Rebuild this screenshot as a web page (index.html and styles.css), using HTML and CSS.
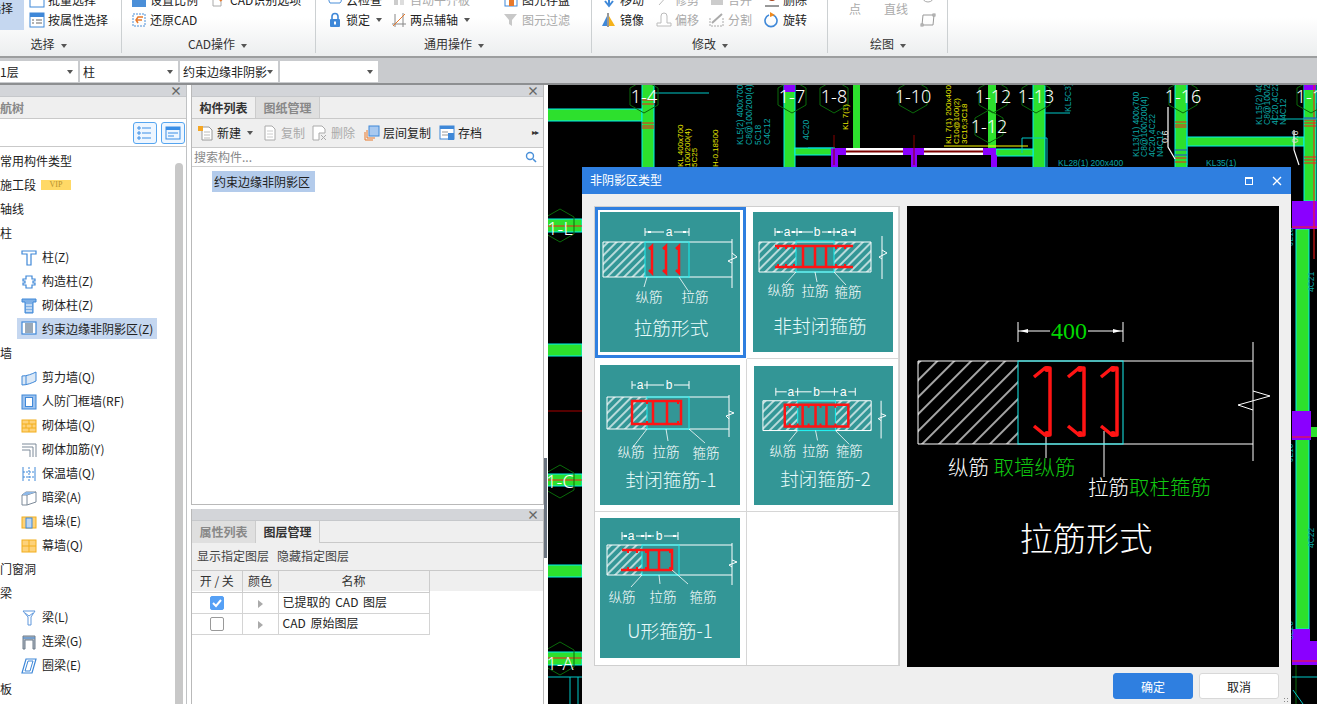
FILE: index.html
```html
<!DOCTYPE html>
<html lang="zh">
<head>
<meta charset="utf-8">
<title>非阴影区类型</title>
<link rel="stylesheet" href="styles.css">
</head>
<body>
<svg class="defs" width="0" height="0">
  <defs>
    <pattern id="hatch" width="6" height="6" patternUnits="userSpaceOnUse" patternTransform="rotate(45)"><line class="hl" x1="3" y1="0" x2="3" y2="6"/></pattern>
    <pattern id="hatchbig" width="12" height="12" patternUnits="userSpaceOnUse" patternTransform="rotate(45)"><line class="hl" x1="6" y1="0" x2="6" y2="12"/></pattern>
  </defs>
</svg>

<header class="ribbon">
  <section class="rgroup g-select">
    <div class="rrows">
      <div class="bigbtn"><span>选择</span></div>
      <div class="rcol">
        <div class="ritem"><svg class="ic" viewBox="0 0 16 16"><rect x="1" y="1" width="14" height="14" fill="#fff" stroke="#3f88d8"/></svg>批量选择</div>
        <div class="ritem"><svg class="ic" viewBox="0 0 16 16"><rect x="1" y="1" width="14" height="14" fill="#fff" stroke="#3f88d8"/><rect x="1" y="1" width="14" height="4" fill="#3f88d8"/><path d="M3 8h2M7 8h6M3 11h2M7 11h6" stroke="#666"/></svg>按属性选择</div>
      </div>
    </div>
    <div class="rlabel">选择<i class="caret"></i></div>
  </section>
  <section class="rgroup g-cad">
    <div class="rrows">
      <div class="rcol">
        <div class="ritem"><svg class="ic" viewBox="0 0 16 16"><rect x="1" y="2" width="14" height="13" fill="#4b8fd8"/></svg>设置比例</div>
        <div class="ritem"><svg class="ic" viewBox="0 0 16 16"><rect x="2" y="2" width="12" height="12" fill="none" stroke="#4b8fd8" stroke-dasharray="2 1"/><path d="M12 5H7L5 8l2 3M5 8h6" fill="none" stroke="#e8792b" stroke-width="1.5"/></svg>还原CAD</div>
      </div>
      <div class="rcol">
        <div class="ritem"><svg class="ic" viewBox="0 0 16 16"><path d="M2 2h8v12H2z" fill="#fff" stroke="#aaa"/><path d="M9 9l5-5" stroke="#e8792b" stroke-width="2"/></svg>CAD识别选项</div>
        <div class="ritem"></div>
      </div>
    </div>
    <div class="rlabel">CAD操作<i class="caret"></i></div>
  </section>
  <section class="rgroup g-common">
    <div class="rrows">
      <div class="rcol">
        <div class="ritem"><svg class="ic" viewBox="0 0 16 16"><path d="M2 9a4 4 0 0 1 4-5h5a4 4 0 0 1 2 7H3z" fill="#fff" stroke="#4b8fd8"/></svg>云检查</div>
        <div class="ritem"><svg class="ic" viewBox="0 0 16 16"><rect x="3" y="7" width="10" height="8" rx="1" fill="#3f88d8"/><path d="M5 7V4.500a3 3 0 0 1 6 0V7" fill="none" stroke="#3f88d8" stroke-width="1.600"/><rect x="7" y="9.500" width="2" height="3" fill="#fff"/></svg>锁定<i class="caret"></i></div>
      </div>
      <div class="rcol">
        <div class="ritem off"><svg class="ic" viewBox="0 0 16 16"><rect x="3" y="3" width="4" height="10" fill="#ccc"/><rect x="9" y="3" width="4" height="10" fill="#ddd"/></svg>自动平齐板</div>
        <div class="ritem"><svg class="ic" viewBox="0 0 16 16"><path d="M1 12h14M4 2v13M12 1v14" stroke="#888" fill="none"/><path d="M2 14L14 2" stroke="#e8792b"/></svg>两点辅轴<i class="caret"></i></div>
      </div>
      <div class="rcol">
        <div class="ritem"><svg class="ic" viewBox="0 0 16 16"><rect x="2" y="2" width="12" height="12" fill="#fff" stroke="#3f88d8"/><rect x="6" y="8" width="5" height="6" fill="#e8792b"/></svg>图元存盘</div>
        <div class="ritem off"><svg class="ic" viewBox="0 0 16 16"><path d="M1 2h13L9 8v6l-3-2V8z" fill="#c8c8c8"/></svg>图元过滤</div>
      </div>
    </div>
    <div class="rlabel">通用操作<i class="caret"></i></div>
  </section>
  <section class="rgroup g-modify">
    <div class="rrows">
      <div class="rcol">
        <div class="ritem"><svg class="ic" viewBox="0 0 16 16"><path d="M8 1v12M4 9l4 5 4-5" fill="none" stroke="#3f88d8" stroke-width="2"/></svg>移动</div>
        <div class="ritem"><svg class="ic" viewBox="0 0 16 16"><path d="M7 1v14" stroke="#333"/><path d="M6 4v10H1z" fill="#3f88d8"/><path d="M8 4v10h6z" fill="#f5b21a"/></svg>镜像</div>
      </div>
      <div class="rcol">
        <div class="ritem off"><svg class="ic" viewBox="0 0 16 16"><path d="M3 13L12 3" stroke="#bbb"/></svg>修剪</div>
        <div class="ritem off"><svg class="ic" viewBox="0 0 16 16"><path d="M1 14v-3h4V4a3 3 0 0 1 6 0v7h4v3z" fill="#fff" stroke="#bbb"/></svg>偏移</div>
      </div>
      <div class="rcol">
        <div class="ritem off"><svg class="ic" viewBox="0 0 16 16"><rect x="2" y="3" width="12" height="10" fill="#ccc"/></svg>合并</div>
        <div class="ritem off"><svg class="ic" viewBox="0 0 16 16"><path d="M1 6v8h13V6" fill="none" stroke="#aaa" stroke-dasharray="2 1"/><path d="M3 11L13 2" stroke="#aaa" stroke-width="2"/></svg>分割</div>
      </div>
      <div class="rcol">
        <div class="ritem"><svg class="ic" viewBox="0 0 16 16"><circle cx="8" cy="5" r="4" fill="#a8431c"/><path d="M1 14h14" stroke="#333"/></svg>删除</div>
        <div class="ritem"><svg class="ic" viewBox="0 0 16 16"><path d="M9 3a6 6 0 1 1-4 0" fill="none" stroke="#3f88d8" stroke-width="1.600"/><path d="M6 0l5 3-5 2z" fill="#f08a1d"/></svg>旋转</div>
      </div>
    </div>
    <div class="rlabel">修改<i class="caret"></i></div>
  </section>
  <section class="rgroup g-draw">
    <div class="rrows">
      <div class="drawtext">
        <span>点</span><span>直线</span>
      </div>
      <div class="rcol drawicons">
        <div class="ritem"><svg class="ic" viewBox="0 0 16 16"><circle cx="8" cy="4" r="6" fill="none" stroke="#aaa"/></svg></div>
        <div class="ritem"><svg class="ic" viewBox="0 0 16 16"><path d="M3 3h11l-1 10H2z" fill="none" stroke="#999"/><rect x="1" y="12" width="2" height="2" fill="#fff" stroke="#999"/><rect x="13" y="2" width="2" height="2" fill="#fff" stroke="#999"/></svg></div>
      </div>
    </div>
    <div class="rlabel">绘图<i class="caret"></i></div>
  </section>
</header>

<nav class="selectbar">
  <div class="sel s1">1层<i class="caret"></i></div>
  <div class="sel s2">柱<i class="caret"></i></div>
  <div class="sel s3">约束边缘非阴影<i class="caret"></i></div>
  <div class="sel s4"><i class="caret"></i></div>
</nav>

<main class="main">
  <aside class="panel leftpanel">
    <div class="phead"><span class="px">×</span></div>
    <div class="tabs"><span class="lefttab">航树</span></div>
    <div class="viewbtns">
      <button class="vbtn"><svg viewBox="0 0 16 16" width="16" height="16"><path d="M5 3h9M5 8h9M5 13h9" stroke="#3a8ee6"/><path d="M1 2h2v2H1zM1 7h2v2H1zM1 12h2v2H1z" fill="none" stroke="#3a8ee6"/></svg></button>
      <button class="vbtn"><svg viewBox="0 0 16 16" width="16" height="16"><rect x="1" y="2" width="14" height="12" fill="none" stroke="#3a8ee6"/><rect x="1" y="2" width="14" height="3" fill="#3a8ee6"/><path d="M3 8h10M3 11h6" stroke="#3a8ee6"/></svg></button>
    </div>
    <div class="tree">
      <div class="tgroup">常用构件类型</div>
      <div class="tgroup">施工段<span class="vip">VIP</span></div>
      <div class="tgroup">轴线</div>
      <div class="tgroup">柱</div>
      <div class="titem"><svg class="tic" viewBox="0 0 16 16"><path d="M1 1h14v3h-3v0H10v11H6V4H1z" fill="#fff" stroke="#3f88d8" stroke-width="1.200"/></svg>柱(Z)</div>
      <div class="titem"><svg class="tic" viewBox="0 0 16 16"><path d="M5 2h6v3h3v2h-2v2h2v2h-3v3H5v-3H2V9h2V7H2V5h3z" fill="#fff" stroke="#3f88d8" stroke-width="1.200"/></svg>构造柱(Z)</div>
      <div class="titem"><svg class="tic" viewBox="0 0 16 16"><path d="M1 1h14v3h-3v11H4V4H1z" fill="#7fb0e6" stroke="#3f88d8"/><path d="M5 7h6M5 10h6M5 13h6" stroke="#fff"/></svg>砌体柱(Z)</div>
      <div class="titem sel-row"><svg class="tic" viewBox="0 0 16 16"><rect x="1" y="2" width="14" height="12" fill="#fff" stroke="#3f88d8" stroke-width="1.200"/><rect x="4" y="3" width="8" height="10" fill="#9aa9b8"/></svg>约束边缘非阴影区(Z)</div>
      <div class="tgroup">墙</div>
      <div class="titem"><svg class="tic" viewBox="0 0 16 16"><path d="M1 6c5 0 10-2 14-4v9c-4 2-9 4-14 4z" fill="#dbe8f6" stroke="#3f88d8"/><path d="M5 6v9" stroke="#3f88d8"/></svg>剪力墙(Q)</div>
      <div class="titem"><svg class="tic" viewBox="0 0 16 16"><rect x="1" y="1" width="14" height="14" fill="#9cc2ee" stroke="#3f88d8"/><rect x="4.500" y="3.500" width="7" height="9" fill="#fff" stroke="#3f88d8"/></svg>人防门框墙(RF)</div>
      <div class="titem"><svg class="tic" viewBox="0 0 16 16"><rect x="1" y="2" width="14" height="12" fill="#fdd27a" stroke="#f2ae1c"/><path d="M1 6h14M1 10h14M8 2v4M5 6v4M11 6v4M8 10v4" stroke="#f2ae1c"/></svg>砌体墙(Q)</div>
      <div class="titem"><svg class="tic" viewBox="0 0 16 16"><path d="M1 2h14v13M1 5h11v10M1 8h8v7" fill="none" stroke="#7d8a99"/></svg>砌体加筋(Y)</div>
      <div class="titem"><svg class="tic" viewBox="0 0 16 16"><path d="M2 1v14M14 1v14" stroke="#3f88d8"/><path d="M8 1v14M2 6h12M2 11h12" stroke="#3f88d8" stroke-dasharray="2 1"/></svg>保温墙(Q)</div>
      <div class="titem"><svg class="tic" viewBox="0 0 16 16"><path d="M1 5l4-3h10v10l-9 3H1z" fill="#fff" stroke="#7d8a99"/><path d="M1 5h5v10M6 5l9-3" fill="none" stroke="#7d8a99"/><path d="M1 5l4-3h10l-9 3z" fill="#8db8e8"/></svg>暗梁(A)</div>
      <div class="titem"><svg class="tic" viewBox="0 0 16 16"><rect x="1" y="3" width="14" height="11" fill="#fdd27a" stroke="#f2ae1c"/><rect x="5" y="4" width="6" height="10" fill="#bcd6f2" stroke="#3f88d8"/></svg>墙垛(E)</div>
      <div class="titem"><svg class="tic" viewBox="0 0 16 16"><rect x="1" y="2" width="14" height="12" fill="#fdd27a" stroke="#f2ae1c"/><path d="M1 8h14M8 2v12" stroke="#f2ae1c"/></svg>幕墙(Q)</div>
      <div class="tgroup">门窗洞</div>
      <div class="tgroup">梁</div>
      <div class="titem"><svg class="tic" viewBox="0 0 16 16"><path d="M2 1h12l-4 6v8H7V7z" fill="#fff" stroke="#5e97dc"/><path d="M4 3l4 3 4-3" fill="none" stroke="#5e97dc"/></svg>梁(L)</div>
      <div class="titem"><svg class="tic" viewBox="0 0 16 16"><path d="M2 15V2h12v13h-2V6H4v9z" fill="#aeb6c0" stroke="#6f7c8b"/><path d="M2 4h12" stroke="#3f88d8"/></svg>连梁(G)</div>
      <div class="titem"><svg class="tic" viewBox="0 0 16 16"><path d="M5 1h10l-4 14H1z" fill="#fff" stroke="#3f88d8" stroke-width="1.200"/><path d="M7 3h5l-3 10H4z" fill="none" stroke="#3f88d8"/></svg>圈梁(E)</div>
      <div class="tgroup">板</div>
      <div class="scrollthumb"></div>
    </div>
  </aside>

  <div class="midcol">
    <section class="panel comp">
      <div class="phead"><span class="px">×</span></div>
      <div class="tabs">
        <span class="tab active">构件列表</span><span class="tab">图纸管理</span>
      </div>
      <div class="mtools">
        <span class="mt t-new"><svg class="ic" viewBox="0 0 16 16"><path d="M4 2h7l3 3v10H4z" fill="#fff" stroke="#999"/><path d="M6 7h6M6 10h6M6 13h6" stroke="#bbb"/><path d="M0 1h5v5H0z" fill="#f5a623"/></svg>新建<i class="caret"></i></span>
        <span class="mt off t-copy"><svg class="ic" viewBox="0 0 16 16"><path d="M3 1h7l3 3v11H3z" fill="#fff" stroke="#aaa"/><path d="M5 6h6M5 9h6M5 12h6" stroke="#ccc"/></svg>复制</span>
        <span class="mt off t-del"><svg class="ic" viewBox="0 0 16 16"><path d="M1 1h9l3 3v4H7v7H1z" fill="#fff" stroke="#aaa"/><path d="M9 10l5 5M14 10l-5 5" stroke="#aaa"/></svg>删除</span>
        <span class="mt t-layer"><svg class="ic" viewBox="0 0 16 16"><rect x="5" y="1" width="10" height="10" fill="#a8c9f0" stroke="#3f88d8"/><path d="M3 5v8h8M1 7v8h8" fill="none" stroke="#e8792b"/></svg>层间复制</span>
        <span class="mt t-save"><svg class="ic" viewBox="0 0 16 16"><rect x="1" y="1" width="14" height="13" fill="#fff" stroke="#3f88d8"/><rect x="1" y="1" width="14" height="3" fill="#3f88d8"/><path d="M3 7h6M3 10h6" stroke="#999"/><rect x="9" y="8" width="6" height="7" fill="#3f88d8"/></svg>存档</span>
        <span class="more">▸▸</span>
      </div>
      <div class="search">搜索构件...<svg class="searchic" viewBox="0 0 12 12" width="12" height="12"><circle cx="5" cy="5" r="3.500" fill="none" stroke="#4a90d9" stroke-width="1.400"/><path d="M8 8l3 3" stroke="#4a90d9" stroke-width="1.600"/></svg></div>
      <div class="complist"><span class="compitem">约束边缘非阴影区</span></div>
    </section>
    <section class="panel layer">
      <div class="phead"><span class="px">×</span></div>
      <div class="tabs tabs2">
        <span class="tab">属性列表</span><span class="tab active">图层管理</span>
      </div>
      <div class="layertools"><span>显示指定图层</span><span>隐藏指定图层</span></div>
      <div class="theadbg">
        <table class="ltable">
          <thead><tr><th class="c1">开 / 关</th><th class="c2">颜色</th><th class="c3">名称</th></tr></thead>
          <tbody>
            <tr><td class="ctr"><span class="chk on"><svg viewBox="0 0 14 14" width="14" height="14"><path d="M3 7l3 3 5-6" fill="none" stroke="#fff" stroke-width="2"/></svg></span></td><td class="ctr"><i class="tri"></i></td><td>已提取的 CAD 图层</td></tr>
            <tr><td class="ctr"><span class="chk"></span></td><td class="ctr"><i class="tri"></i></td><td>CAD 原始图层</td></tr>
          </tbody>
        </table>
      </div>
    </section>
  </div>

  <div class="sash"><i></i></div>

  <div class="canvas">
    <svg class="cad" width="769" height="619" viewBox="548 85 769 619">
      <rect x="548" y="85" width="769" height="619" fill="#000"/>
      <g fill="#2de02d" stroke="#00f0f0" stroke-width="1">
        <rect x="540" y="109" width="102" height="12"/>
        <rect x="642" y="80" width="12" height="100"/>
        <rect x="784" y="80" width="11" height="100"/>
        <rect x="853" y="80" width="7" height="70" stroke="none"/>
        <rect x="988" y="80" width="8" height="70" stroke="none"/>
        <rect x="1033" y="80" width="12" height="100"/>
        <rect x="1175" y="80" width="12" height="100"/>
        <rect x="1187" y="137" width="117" height="9"/>
        <rect x="1304" y="80" width="12" height="121"/>
        <rect x="795" y="148" width="38" height="7"/>
        <rect x="996" y="149" width="37" height="7"/>
        <rect x="540" y="219" width="42" height="13"/>
        <rect x="540" y="344" width="42" height="12"/>
        <rect x="540" y="474" width="42" height="12"/>
        <rect x="540" y="565" width="42" height="12"/>
        <rect x="540" y="652" width="42" height="13"/>
        <rect x="1296" y="229" width="13" height="400"/>
        <rect x="1311" y="427" width="8" height="10" stroke="none"/>
      </g>
      <rect x="843" y="148" width="147" height="7" fill="#fff"/>
      <path d="M843 151.500H990" stroke="#7a0000" stroke-width="2"/>
      <g fill="#8a00ff">
        <rect x="831" y="148" width="15" height="7"/><rect x="903" y="148" width="21" height="7"/><rect x="983" y="148" width="13" height="7"/>
        <rect x="784" y="85" width="11" height="7"/>
        <rect x="1304" y="85" width="12" height="5"/>
        <rect x="1292" y="201" width="25" height="28"/>
        <rect x="1292" y="411" width="19" height="29"/>
        <path d="M1292 629h18v12h7v24h-25z"/>
        <rect x="831" y="155" width="7" height="12"/><rect x="911" y="155" width="6" height="12"/><rect x="991" y="155" width="6" height="12"/>
      </g>
      <g stroke="#ff1a1a" stroke-width="1" fill="none">
        <path d="M642 100h12M642 104h12M642 123h12M642 126h12M642 128h12M1175 122h12M1175 125h12M1175 127h12M1175 158h12M1175 162h12M1304 120h12M1304 123h12M1304 126h12M1304 157h12M1304 160h12M1304 163h12"/>
        <path d="M548 226h34M548 480h34M548 658h34M1292 227h25M1292 437h19M1292 661h25"/>
        <path d="M1314 85v174"/>
      </g>
      <path d="M548 411h34" stroke="#500" stroke-width="2"/>
      <path d="M834 135v30M914 135v30" stroke="#8a0000"/>
      <path d="M1296 665v39" stroke="#0a6a0a"/>
      <g stroke="#00c8c8" fill="none">
        <path d="M654 93h55M548 677h34M570 677v27M578 677v27M1292 677h25M1187 85v80M1045 113h25M808 148h27M1022 138h25M1047 138v29M1022 138v15M1270 119h47"/>
        <path d="M1293 690l10 14"/>
      </g>
      <path d="M944 146h84" stroke="#ffff00"/>
      <path d="M1168 107v40l7 12M1294 130v20l5 15" stroke="#fff" stroke-width="1.200" fill="none"/>
      <path d="M1175 150h12M1175 155h12M1304 118h12" stroke="#2a3fe0" stroke-width="1"/>
      <g fill="none" stroke="#0a6a0a" stroke-width="1">
        <path d="M644 80l14 8v17l-14 8-14-8V88z"/>
        <path d="M792 80l14 8v17l-14 8-14-8V88z"/>
        <path d="M834 80l14 8v17l-14 8-14-8V88z"/>
        <path d="M913 80l14 8v17l-14 8-14-8V88z"/>
        <path d="M993 80l14 8v17l-14 8-14-8V88z"/>
        <path d="M1036 80l14 8v17l-14 8-14-8V88z"/>
        <path d="M989 110l14 8v17l-14 8-14-8V118z"/>
        <path d="M1183 80l14 8v17l-14 8-14-8V88z"/>
        <path d="M1311 80l14 8v17l-14 8-14-8V88z"/>
        <path d="M560 209l14 8v17l-14 8-14-8V217z"/>
        <path d="M560 465l14 8v17l-14 8-14-8V473z"/>
        <path d="M560 642l14 8v17l-14 8-14-8V650z"/>
      </g>
      <g class="axis">
        <text x="644" y="103">1-4</text><text x="792" y="103">1-7</text><text x="834" y="103">1-8</text>
        <text x="913" y="103">1-10</text><text x="993" y="103">1-12</text><text x="1036" y="103">1-13</text>
        <text x="989" y="133">1-12</text><text x="1183" y="103">1-16</text><text x="1309" y="103">1-1</text>
        <text x="560" y="235">1-L</text><text x="560" y="488">1-C</text><text x="560" y="670">1-A</text>
      </g>
      <g class="ctext">
        <text transform="translate(743 145) rotate(-90)">KL5(2) 400x700</text>
        <text transform="translate(752 145) rotate(-90)">C8@100/200(4)</text>
        <text transform="translate(761 145) rotate(-90)">5C18</text>
        <text transform="translate(770 145) rotate(-90)">C4C12</text>
        <text transform="translate(809 140) rotate(-90)">4C20</text>
        <text transform="translate(1071 112) rotate(-90)">KL5C3)</text>
        <text transform="translate(1139 157) rotate(-90)">KL13(1) 400x700</text>
        <text transform="translate(1147 157) rotate(-90)">C8@100/200(4)</text>
        <text transform="translate(1155 157) rotate(-90)">4C20,4C22</text>
        <text transform="translate(1163 157) rotate(-90)">N4C12</text>
        <text transform="translate(1262 125) rotate(-90)">KL15(2) 400x</text>
        <text transform="translate(1270 125) rotate(-90)">C8@100/200</text>
        <text transform="translate(1278 125) rotate(-90)">4C20,4C22</text>
        <text transform="translate(1286 125) rotate(-90)">N4C12</text>
        <text transform="translate(1314 292) rotate(-90)">4C21</text>
        <text transform="translate(1314 548) rotate(-90)">4C22</text>
        <text transform="translate(1293 246) rotate(-90)">JL10</text>
        <text transform="translate(1293 462) rotate(-90)">JL10</text>
        <text transform="translate(1293 640) rotate(-90)">6L20</text>
        <text x="1206" y="166">KL35(1)</text>
        <text x="1058" y="166">KL28(1) 200x400</text>
      </g>
      <g class="ytext">
        <text transform="translate(683 167) rotate(-90)">KL 400x700</text>
        <text transform="translate(690 167) rotate(-90)">100/200(4)</text>
        <text transform="translate(697 167) rotate(-90)">5C25</text>
        <text transform="translate(718 167) rotate(-90)">H-0.18500</text>
        <text transform="translate(848 130) rotate(-90)">KL 7(1)</text>
        <text transform="translate(951 144) rotate(-90)">KL 7(1) 200x400</text>
        <text transform="translate(959 144) rotate(-90)">C10@100(2)</text>
        <text transform="translate(967 144) rotate(-90)">3C16;3C18</text>
      </g>
      <g class="wtext"><text transform="translate(1168 143) rotate(-90)">0.6</text><text transform="translate(1298 143) rotate(-90)">0.6</text></g>
    </svg>
  </div>
</main>

<div class="dialog">
  <div class="dtitle"><span>非阴影区类型</span><span class="dctrl"><i class="dmax"></i><svg viewBox="0 0 10 10" width="10" height="10"><path d="M1 1l8 8M9 1l-8 8" stroke="#fff" stroke-width="1.300"/></svg></span></div>
  <div class="dbody">
    <div class="dgrid">
      <div class="cell selected">
        <svg class="tile" viewBox="0 0 140 140" width="140" height="140">
          <rect x="3" y="30" width="42" height="35" fill="url(#hatch)"/>
          <path class="wl" d="M3 30H132M3 65H132M3 30V65M132 27V76M132 41l5 4-9 4 4 2M45 16v8M89 16v8M45 20H64M74 20H89"/>
          <path class="mk" d="M48 19h3v2h-3zM83 19h3v2h-3z"/>
          <rect class="cy" x="45" y="30" width="44" height="35"/>
          <path class="rd" d="M49 37l3-3v27l-3-3M63 37l3-3v27l-3-3M76 37l3-3v27l-3-3"/>
          <path class="wt" d="M47 65l-3 10M79 65l10 15"/>
          <text class="dimt" x="69" y="24">a</text>
          <text class="lab" x="49" y="90">纵筋</text><text class="lab" x="95" y="90">拉筋</text>
          <text class="ttl" x="71" y="123">拉筋形式</text>
        </svg>
      </div>
      <div class="cell">
        <svg class="tile" viewBox="0 0 140 140" width="140" height="140">
          <rect x="6" y="30" width="37" height="30" fill="url(#hatch)"/><rect x="81" y="30" width="37" height="30" fill="url(#hatch)"/>
          <path class="wl" d="M6 30H118M6 60H118M6 30V60M118 30V60M129 24V67M129 38l5 3-8 4 3 2M22 16v8M44 16v8M81 16v8M102 16v8M22 20H30M38 20H44M44 20H60M69 20H87M95 20H102"/>
          <path class="mk" d="M24 19h3v2h-3zM39 19h3v2h-3zM46 19h3v2h-3zM75 19h3v2h-3zM84 19h3v2h-3zM98 19h3v2h-3z"/>
          <rect class="cy" x="43" y="29" width="38" height="31"/>
          <path class="rd" d="M22 34H100M22 55H100M50 34V55M62 34V55M73 34V55"/>
          <path class="rt" d="M25 34v3M33 34v3M41 34v3M25 55v-3M33 55v-3M41 55v-3M83 34v3M92 34v3M83 55v-3M92 55v-3"/>
          <path class="wt" d="M43 60l-10 11M62 60l2 10M81 60l12 13"/>
          <text class="dimt" x="34" y="24">a</text><text class="dimt" x="64" y="24">b</text><text class="dimt" x="91" y="24">a</text>
          <text class="lab" x="28" y="83">纵筋</text><text class="lab" x="62" y="84">拉筋</text><text class="lab" x="95" y="85">箍筋</text>
          <text class="ttl" x="67" y="121">非封闭箍筋</text>
        </svg>
      </div>
      <div class="cell">
        <svg class="tile" viewBox="0 0 140 140" width="140" height="140">
          <rect x="7" y="32" width="40" height="32" fill="url(#hatch)"/>
          <path class="wl" d="M7 32H129M7 64H129M7 32V64M129 30V72M129 46l5 2-8 3 3 3M32 16v8M47 16v8M89 16v8M32 20H36M44 20H47M47 20H64M74 20H89"/>
          <rect class="cy" x="47" y="32" width="42" height="32"/>
          <path class="rd" d="M32 36H81V59H32zM53 36V59M67 36V59"/>
          <path class="rt" d="M47 36v3M53 36v3M67 36v3M78 36v3M47 59v-3M53 59v-3M67 59v-3M78 59v-3"/>
          <path class="wt" d="M47 64l-14 18M66 64l2 12M89 64l16 14"/>
          <text class="dimt" x="40" y="24">a</text><text class="dimt" x="69" y="24">b</text>
          <text class="lab" x="31" y="92">纵筋</text><text class="lab" x="66" y="92">拉筋</text><text class="lab" x="106" y="93">箍筋</text>
          <text class="ttl" x="71" y="122">封闭箍筋-1</text>
        </svg>
      </div>
      <div class="cell c4">
        <svg class="tile" viewBox="0 0 140 140" width="139" height="139">
          <rect x="9" y="35" width="35" height="30" fill="url(#hatch)"/><rect x="82" y="35" width="36" height="30" fill="url(#hatch)"/>
          <path class="wl" d="M9 35H118M9 65H118M9 35V65M118 35V65M128 35V73M128 48l5 2-8 3 3 2M22 22v8M44 22v8M81 22v8M102 22v8M22 26H33M41 26H58M67 26H85M95 26H102"/>
          <rect class="cy" x="44" y="35" width="38" height="30"/>
          <path class="rd" d="M31 39H95V61H31zM49 39V61M62 39V61M73 39V61"/>
          <path class="rt" d="M36 39v3M44 39v3M55 39v3M67 39v3M82 39v3M36 61v-3M44 61v-3M55 61v-3M67 61v-3M82 61v-3"/>
          <path class="wt" d="M44 65l-9 11M62 65l2 10M82 65l14 14"/>
          <text class="dimt" x="37" y="30">a</text><text class="dimt" x="63" y="30">b</text><text class="dimt" x="90" y="30">a</text>
          <text class="lab" x="29" y="91">纵筋</text><text class="lab" x="62" y="91">拉筋</text><text class="lab" x="96" y="91">箍筋</text>
          <text class="ttl" x="72" y="121">封闭箍筋-2</text>
        </svg>
      </div>
      <div class="cell">
        <svg class="tile" viewBox="0 0 140 140" width="140" height="140">
          <rect x="7" y="27" width="35" height="30" fill="url(#hatch)"/>
          <path class="wl" d="M7 27H132M7 57H132M7 27V57M132 25V67M132 42l5 2-8 3 3 2M22 14v8M46 14v8M78 14v8M22 18H27M36 18H54M64 18H78"/>
          <path class="mk" d="M24 17h3v2h-3zM41 17h3v2h-3zM48 17h3v2h-3zM73 17h3v2h-3z"/>
          <rect class="cy" x="42" y="27" width="37" height="30"/>
          <path class="rd" d="M22 32H72V52H21M48 32V52M59 32V52"/>
          <path class="rt" d="M28 32v3M37 32v3M46 32v3M70 32v3M28 52v-3M37 52v-3M46 52v-3M70 52v-3"/>
          <path class="wt" d="M42 57l-11 12M59 57l1 9M72 52l16 14"/>
          <text class="dimt" x="31" y="22">a</text><text class="dimt" x="59" y="22">b</text>
          <text class="lab" x="22" y="84">纵筋</text><text class="lab" x="63" y="84">拉筋</text><text class="lab" x="103" y="84">箍筋</text>
          <text class="ttl" x="70" y="120">U形箍筋-1</text>
        </svg>
      </div>
      <div class="cell"></div>
    </div>
    <div class="preview">
      <svg viewBox="907 206 372 461" width="372" height="461">
        <rect x="918" y="361" width="100" height="83" fill="url(#hatchbig)"/>
        <path class="wl2" d="M918 361H1253M918 444H1253M918 361V444M1253 342V461M1253 391l17 5-32 9 15 5M1018 322v20M1123 322v20M1018 331H1050M1088 331H1123M1046 436v22M1104 431v46"/>
        <path d="M1020 331l8-2v4zM1121 331l-8-2v4z" fill="#fff"/>
        <rect class="cy2" x="1018" y="361" width="105" height="83"/>
        <path class="rd2" d="M1034 377l11-9h5V435h-5l-11-9M1068 377l11-9h5V435h-5l-11-9M1101 377l11-9h5V435h-5l-11-9"/>
        <path d="M1047 369m-3 0a3 3 0 1 0 6 0a3 3 0 1 0-6 0M1047 434m-3 0a3 3 0 1 0 6 0a3 3 0 1 0-6 0M1080 369m-3 0a3 3 0 1 0 6 0a3 3 0 1 0-6 0M1080 434m-3 0a3 3 0 1 0 6 0a3 3 0 1 0-6 0M1113 369m-3 0a3 3 0 1 0 6 0a3 3 0 1 0-6 0M1113 434m-3 0a3 3 0 1 0 6 0a3 3 0 1 0-6 0" fill="#ff1414"/>
        <text class="big400" x="1069" y="339">400</text>
        <text class="pv" x="948" y="475"><tspan>纵筋</tspan> <tspan class="gr">取墙纵筋</tspan></text>
        <text class="pv" x="1088" y="495"><tspan>拉筋</tspan><tspan class="gr">取柱箍筋</tspan></text>
        <text class="pvt" x="1086" y="551">拉筋形式</text>
      </svg>
    </div>
  </div>
  <div class="dfoot"><button class="btn primary">确定</button><button class="btn">取消</button></div>
  <i class="grip"></i>
</div>
</body>
</html>
```
FILE: styles.css
```css
* { box-sizing: border-box; }
html, body { margin: 0; padding: 0; }
body {
  width: 1317px; height: 704px; overflow: hidden; position: relative; background: #fff;
  font: 12px/1.2 "Noto Sans CJK SC", "Noto Sans", sans-serif; color: #222;
}
.defs { position: absolute; }
.hl { stroke: #fff; stroke-width: 1.3; }
.caret { display: inline-block; width: 0; height: 0; border: 3.5px solid transparent; border-top: 4px solid #555; border-bottom: 0; margin-left: 6px; vertical-align: middle; }
.ic { width: 16px; height: 16px; flex: none; margin-right: 3px; }

/* ribbon */
.ribbon { height: 58px; display: flex; overflow: hidden; align-items: flex-end; background: linear-gradient(#fff 30%, #eceeef); border-bottom: 2px solid #9c9e9f; }
.rgroup { flex: none; position: relative; }
.rgroup::after { content: ""; position: absolute; right: 0; top: 0; bottom: 3px; width: 1px; background: #ccd0d2; }
.g-select { width: 122px; } .g-cad { width: 194px; } .g-common { width: 276px; } .g-modify { width: 236px; } .g-draw { width: 120px; }
.rrows { display: flex; height: 40px; align-items: flex-end; }
.rcol { display: flex; flex-direction: column; flex: none; }
.ritem { height: 20px; display: flex; align-items: center; white-space: nowrap; color: #222; }
.ritem.off { color: #aaa; }
.rlabel { height: 26px; line-height: 28px; text-align: center; color: #333; font-size: 12px; }
.rlabel .caret { margin-left: 6px; }
.g-select .rlabel { padding-right: 25px; }
.g-cad .rlabel { padding-right: 3px; }
.bigbtn { width: 24px; height: 32px; background: #c5d7f0; margin-right: 5px; overflow: hidden; align-self: flex-end; }
.bigbtn span { display: block; margin-left: -11px; width: 30px; padding-top: 3px; white-space: nowrap; }
.g-cad .rcol:first-child { margin-left: 9px; width: 80px; }
.g-common .rcol:first-child { margin-left: 11px; width: 64px; }
.g-common .rcol:nth-child(2) { width: 112px; }
.g-modify .rcol { width: 55px; }
.g-modify .rcol:first-child { margin-left: 9px; }
.g-modify .rcol:nth-child(2) { width: 53px; }
.drawtext { width: 92px; height: 40px; color: #aaa; padding: 12px 0 0 21px; display: flex; gap: 23px; align-self: flex-start; font-size: 12px; }
.drawicons { margin-top: -10px; }
.drawicons .ic { margin: 0; }

/* selects */
.selectbar { height: 27px; background: #c9cbce; border-bottom: 2px solid #8d8f91; display: flex; padding-top: 3px; gap: 2px; }
.sel { height: 21px; background: #fff; line-height: 21px; padding-left: 3px; position: relative; white-space: nowrap; overflow: hidden; flex: none; }
.sel .caret { position: absolute; right: 5px; top: 9px; margin: 0; }
.s1 { width: 78px; padding-left: 0; } .s2 { width: 98px; } .s3 { width: 98px; } .s4 { width: 98px; }

/* panels */
.main { display: flex; height: 619px; background: #fff; }
.panel { background: #fff; }
.leftpanel { width: 187px; border-right: 1px solid #c0c2c4; display: flex; flex-direction: column; margin-right: 4px; flex: none; }
.phead { height: 12px; background: #d3d5d9; position: relative; border-bottom: 1px solid #c6c8cb; flex: none; }
.px { position: absolute; right: 4px; top: -1px; font-size: 12px; line-height: 13px; color: #666; font-weight: 700; }
.tabs { height: 22px; background: #efefef; border-bottom: 1px solid #c9c9c9; display: flex; flex: none; }
.lefttab { font-weight: 700; color: #888; line-height: 21px; font-size: 12px; }
.tab { width: 64px; line-height: 21px; text-align: center; background: #dfdfdf; color: #888; font-weight: 700; border-right: 1px solid #ccc; }
.tab.active { background: #efefef; color: #333; }
.tabs2 .tab { height: 22px; }
.viewbtns { height: 28px; display: flex; gap: 4px; justify-content: flex-end; padding: 3px 1px 0 0; border-bottom: 1px solid #c9c9c9; flex: none; }
.vbtn { width: 24px; height: 22px; padding: 2px 3px; background: #eef6ff; border: 1px solid #55a5f0; border-radius: 3px; }
.tree { position: relative; flex: 1; padding-top: 2px; overflow: hidden; }
.tgroup { height: 24px; line-height: 24px; white-space: nowrap; display: flex; align-items: center; }
.vip { width: 30px; height: 10px; margin-left: 5px; background: #ffd966; color: #b8912e; font: 8px/10px "Liberation Serif", serif; text-align: center; }
.titem { height: 24px; width: 140px; margin-left: 17px; padding: 1px 0 0 4px; display: flex; align-items: center; white-space: nowrap; }
.sel-row { background: linear-gradient(#c5d7f0, #c5d7f0) 0 1px / 100% 21px no-repeat; padding-top: 1px; align-items: flex-start; line-height: 21px; }
.sel-row .tic { margin-top: 2px; }
.tic { width: 16px; height: 16px; margin-right: 5px; flex: none; }
.scrollthumb { position: absolute; left: 175px; top: 16px; width: 8px; height: 600px; background: #c8c8c8; border-radius: 4px 4px 0 0; }

.midcol { width: 353px; flex: none; display: flex; flex-direction: column; gap: 4px; }
.comp { height: 420px; border: solid #b9b9b9; border-width: 0 1px 1px 1px; display: flex; flex-direction: column; }
.layer { flex: 1; border: solid #b9b9b9; border-width: 0 1px; display: flex; flex-direction: column; }
.mtools { height: 29px; background: #efefef; border-bottom: 1px solid #c9c9c9; display: flex; align-items: center; position: relative; padding-left: 6px; flex: none; }
.mt { display: flex; align-items: center; white-space: nowrap; flex: none; }
.mt .ic { margin-right: 3px; }
.mt.off { color: #aaa; }
.t-new { width: 64px; } .t-copy { width: 50px; } .t-del { width: 52px; } .t-layer { width: 75px; }
.more { position: absolute; right: 5px; top: 8px; font-size: 8px; letter-spacing: -1px; color: #333; }
.search { height: 19px; line-height: 18px; padding-left: 2px; color: #888; background: #fff; border-bottom: 1px solid #cfcfcf; position: relative; flex: none; }
.searchic { position: absolute; right: 6px; top: 3px; }
.complist { flex: 1; padding: 4px 0 0 20px; }
.compitem { display: inline-block; height: 21px; line-height: 21px; width: 103px; background: #b3cbeb; padding-left: 2px; white-space: nowrap; }
.layertools { height: 28px; background: #efefef; border-bottom: 1px solid #c9c9c9; display: flex; gap: 8px; align-items: center; padding-left: 5px; color: #444; flex: none; }
.theadbg { background: linear-gradient(#efefef 20px, #fff 20px); flex: 1; }
.ltable { border-collapse: collapse; table-layout: fixed; width: 237px; }
.ltable th { height: 21px; font-weight: 400; color: #333; border: 1px solid #ccc; border-top: 0; padding: 0; }
.ltable td { height: 21px; border: 1px solid #d4d4d4; padding: 0 0 0 4px; white-space: nowrap; word-spacing: 2px; }
.ltable th:first-child, .ltable td:first-child { border-left: 0; }
.c1 { width: 50px; } .c2 { width: 36px; } .c3 { width: 151px; }
.ctr { text-align: center; padding: 0 !important; }
.chk { display: inline-block; width: 14px; height: 14px; border: 1px solid #999; border-radius: 2px; vertical-align: middle; background: #fff; }
.chk.on { background: #55a0f5; border-color: #55a0f5; }
.chk svg { display: block; margin: -1px; }
.tri { display: inline-block; width: 0; height: 0; border: 4px solid transparent; border-left: 5px solid #aaa; border-right: 0; vertical-align: middle; }

.sash { width: 4px; flex: none; background: #fff; position: relative; }
.sash i { display: block; width: 3px; height: 100px; margin-top: 373px; background: #6b7480; }
.canvas { flex: 1; overflow: hidden; background: #000; }
.cad { display: block; }
.axis text { font: 300 18px "Noto Sans", sans-serif; fill: #fff; text-anchor: middle; }
.ctext text { font: 8.5px "Liberation Sans Narrow", "Liberation Sans", sans-serif; fill: #0aa5a5; }
.ytext text { font: 8px "Liberation Sans Narrow", "Liberation Sans", sans-serif; fill: #e6e600; }
.wtext text { font: 9px "Liberation Sans", sans-serif; fill: #ddd; }

/* dialog */
.dialog { position: absolute; left: 582px; top: 167px; width: 709px; height: 537px; background: #efefef; display: flex; flex-direction: column; }
.dtitle { height: 27px; background: #2f7fe0; color: #fff; display: flex; justify-content: space-between; align-items: center; padding: 0 9px 0 8px; flex: none; }
.dctrl { display: flex; align-items: center; gap: 19px; }
.dmax { width: 8px; height: 8px; border: 1px solid #fff; border-top-width: 2px; }
.dbody { display: flex; height: 473px; padding: 12px 12px 0; gap: 7px; flex: none; }
.dgrid { width: 306px; height: 460px; background: #fff; border: 1px solid #cfcfcf; display: grid; grid-template-columns: 152px 152px; grid-template-rows: 152px 153px 153px; }
.cell { border: solid #d6d6d6; border-width: 0 1px 1px 0; padding: 6px 0 0 5px; }
.cell:nth-child(2) { padding: 5px 0 0 6px; }
.cell.selected { border: 3px solid #2f7fe0; padding: 2px; width: 151px; height: 151px; }
.cell.c4 { padding: 7px 0 0 7px; }
.cell:nth-child(n+5) { border-bottom: 0; }
.tile { display: block; background: #339696; }
.wl { fill: none; stroke: #fff; stroke-width: 1; }
.wt { fill: none; stroke: #fff; stroke-width: 0.8; }
.mk { fill: #fff; }
.cy { fill: none; stroke: #18f0f0; stroke-width: 1; }
.rd { fill: none; stroke: #ff1414; stroke-width: 2.5; }
.rt { fill: none; stroke: #ff1414; stroke-width: 2; }
.dimt { font: 12px "Liberation Sans", sans-serif; fill: #fff; text-anchor: middle; }
.lab { font-size: 13.5px; font-weight: 300; fill: #fff; text-anchor: middle; }
.ttl { font-size: 18.7px; font-weight: 300; fill: #e8fbfb; text-anchor: middle; }
.preview { width: 372px; height: 461px; background: #000; flex: none; }
.preview svg { display: block; }
.wl2 { fill: none; stroke: #fff; stroke-width: 1; }
.cy2 { fill: none; stroke: #18f0f0; stroke-width: 1; }
.rd2 { fill: none; stroke: #ff1414; stroke-width: 3.5; stroke-linejoin: round; }
.big400 { font: 24px "Liberation Serif", serif; fill: #00d800; text-anchor: middle; }
.pv { font-size: 20.5px; font-weight: 300; fill: #fff; }
.gr { fill: #10c810; }
.pvt { font-size: 33.2px; font-weight: 300; fill: #fff; text-anchor: middle; }
.dfoot { display: flex; justify-content: flex-end; gap: 6px; padding: 6px 12px 0 0; }
.btn { width: 80px; height: 26px; padding: 0; font: 12px "Noto Sans CJK SC", sans-serif; color: #222; background: #fff; border: 1px solid #d8d8d8; border-radius: 3px; }
.btn.primary { background: #2f7fe0; border-color: #2f7fe0; color: #fff; }
.grip { position: absolute; right: 2px; bottom: 1px; width: 6px; height: 6px; background: radial-gradient(#888 40%, transparent 45%) 0 0 / 3px 3px; }
```
